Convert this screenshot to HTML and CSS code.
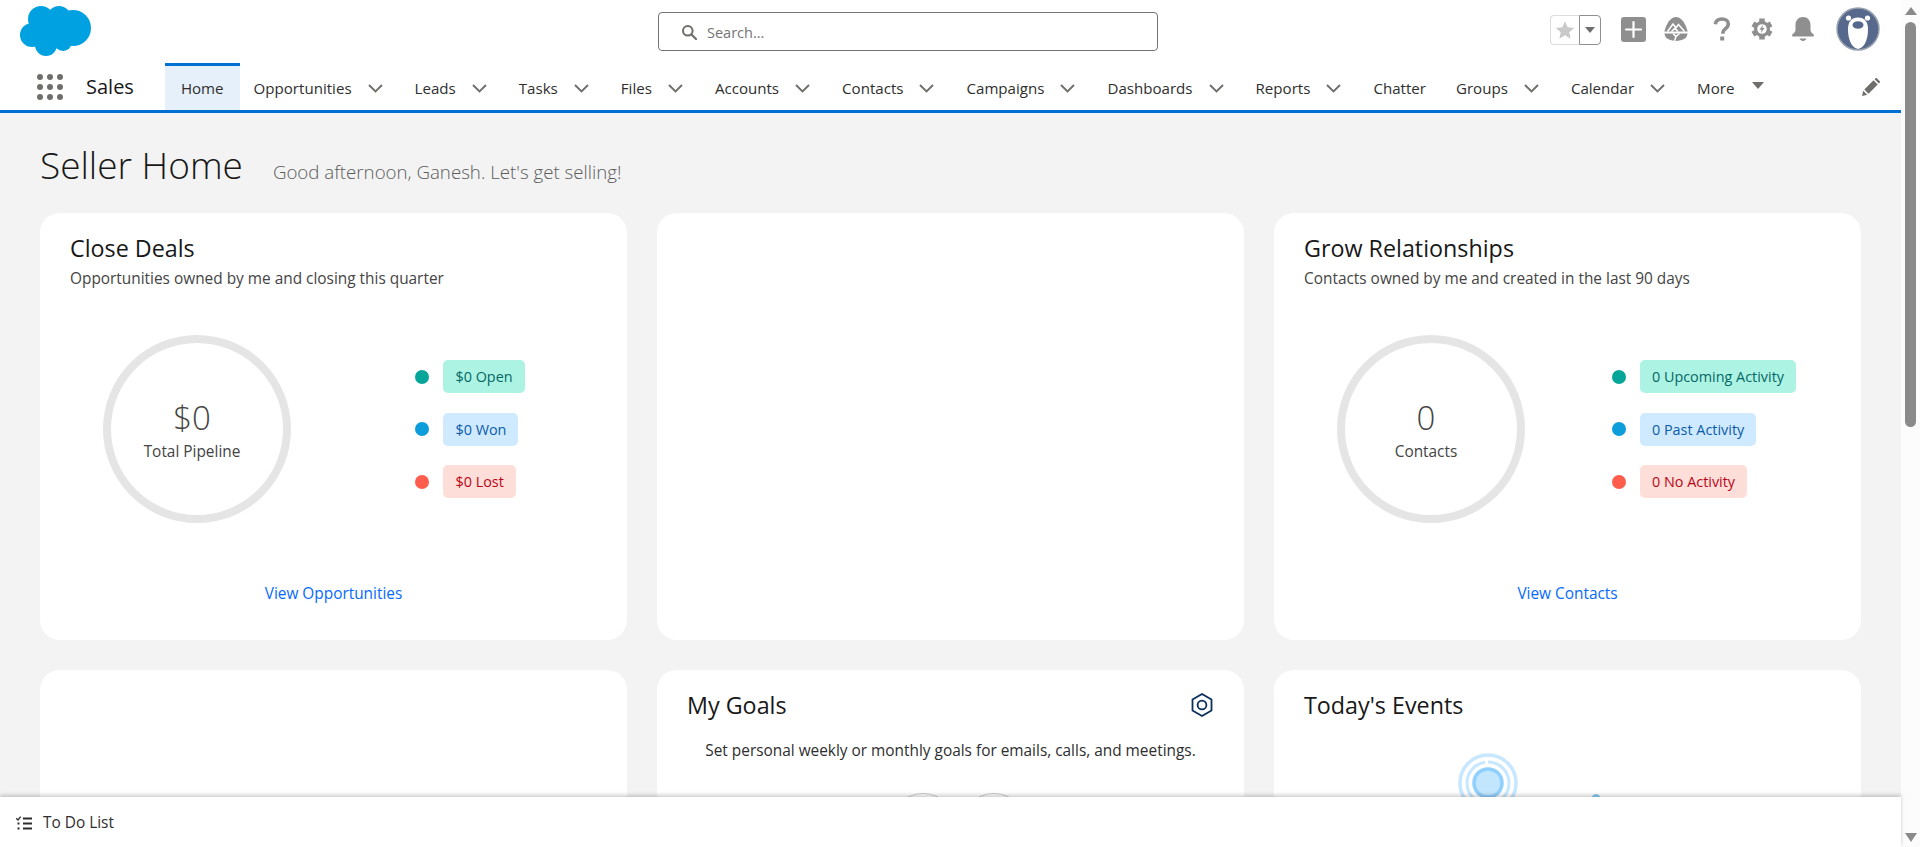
FILE: index.html
```html
<!DOCTYPE html>
<html>
  <head>
    <title>Seller Home</title>
    <link rel="stylesheet" href="styles.css">
  </head>
  <body>
    <div class="app">
      <div class="main">
        <header class="header">
          <div class="topbar">
            <svg class="logo" viewBox="0 0 71 50" width="71" height="50">
              <g fill="#00a1e0">
                <circle cx="21" cy="13" r="13" />
                <circle cx="39" cy="12" r="12" />
                <circle cx="53" cy="22" r="18" />
                <circle cx="12" cy="29" r="12" />
                <circle cx="26" cy="39" r="11" />
                <circle cx="43" cy="36" r="9" />
                <rect x="14" y="12" width="38" height="26" />
              </g>
            </svg>
            <div class="search">
              <svg viewBox="0 0 16 16" width="16" height="16">
                <circle cx="6.8" cy="6.8" r="4.8" fill="none" stroke="#706e6b" stroke-width="2" />
                <path d="M10.5 10.5 L15 15" stroke="#706e6b" stroke-width="2.2" stroke-linecap="round" />
              </svg>
              <span>Search...</span>
            </div>
            <div class="actions">
              <div class="fav">
                <div class="fav-star">
                  <svg viewBox="0 0 24 24" width="20" height="20"><path d="M12 1.500l3.200 7.200 7.800.8-5.900 5.200 1.700 7.700L12 18.400l-6.800 4 1.700-7.700L1 9.500l7.800-.8z" fill="#c9c9c9" /></svg>
                </div>
                <div class="fav-more"><i class="tri tri-sm"></i></div>
              </div>
              <svg class="act act-plus" viewBox="0 0 25 25" width="25" height="25">
                <rect width="25" height="25" rx="3" fill="#8f8f8f" />
                <path d="M12.500 5v15M5 12.500h15" stroke="#fff" stroke-width="2.200" stroke-linecap="round" />
              </svg>
              <svg class="act act-trail" viewBox="0 0 24 24" width="24" height="24">
                <path d="M12 0C7.500 0 4 4.500 2 9.500L.3 14.500h23.400L22 9.500C20 4.500 16.500 0 12 0z" fill="#8f8f8f" />
                <path d="M.4 16.500h23.200c-.4 3-2 5-4.600 6.100-2 .8-4.500 1.400-7 1.400s-5-.6-7-1.400C2.400 21.500.8 19.500.4 16.500z" fill="#8f8f8f" />
                <path d="M3.500 14.500L9 7l3 3.800L14.500 7.500l6 7M7.500 14.500l3.500-3.500 3 3.500M9 16.500l3 3-1.500 4.500M15.500 16.500l-3.500 3" fill="none" stroke="#fff" stroke-width="1.500" />
              </svg>
              <svg class="act act-help" viewBox="0 0 18 24" width="18" height="24">
                <path d="M2.300 7.300C2.800 3.500 5.400 2 9 2c3.800 0 6.300 2.100 6.300 5 0 2.500-1.500 3.700-3 4.900-1.700 1.200-2.400 2-2.400 4v.8" fill="none" stroke="#8f8f8f" stroke-width="3.600" />
                <rect x="7.200" y="19.400" width="4" height="4" rx=".5" fill="#8f8f8f" />
              </svg>
              <svg class="act act-gear" viewBox="0 0 22 22" width="22" height="22">
                <circle cx="11" cy="11" r="8" fill="#8f8f8f" />
                <g stroke="#8f8f8f" stroke-width="5.500">
                  <path d="M11 .5v21" />
                  <path d="M1.900 5.800l18.200 10.400" />
                  <path d="M1.900 16.200l18.200-10.400" />
                </g>
                <circle cx="11" cy="11" r="4.800" fill="#fff" />
                <path d="M12 7L8.500 11.800h2.100l-.7 3.200 3.600-4.900h-2.100z" fill="#8f8f8f" />
              </svg>
              <svg class="act act-bell" viewBox="0 0 24 24" width="24" height="24">
                <path d="M12 0c-4.500 0-7.500 3.500-7.500 8v4.500c0 2.500-1.500 3.800-3.300 5v2h21.600v-2c-1.800-1.200-3.300-2.500-3.300-5V8C19.500 3.500 16.500 0 12 0z" fill="#8f8f8f" />
                <path d="M8.500 21.500h7c-.5 1.500-2 2.500-3.500 2.500s-3-1-3.500-2.500z" fill="#8f8f8f" />
              </svg>
              <svg class="avatar" viewBox="0 0 44 44" width="44" height="44">
                <circle cx="22" cy="22" r="21" fill="#56698d" stroke="#9aa2ae" stroke-width="1.500" />
                <circle cx="12.500" cy="11" r="2.600" fill="#fff" />
                <circle cx="31.500" cy="11" r="2.600" fill="#fff" />
                <path d="M22 10.500c6.500 0 10 4.500 10 11.500 0 8-2 18-10 20C14 40 12 30 12 22c0-7 3.500-11.500 10-11.500z" fill="#fff" />
                <ellipse cx="22" cy="18" rx="5.500" ry="3.800" fill="#56698d" />
              </svg>
            </div>
          </div>
          <nav class="navbar">
            <svg class="launcher" viewBox="0 0 26 26" width="26" height="26">
              <g fill="#706e6b">
                <circle cx="3" cy="3" r="3" /><circle cx="13" cy="3" r="3" /><circle cx="23" cy="3" r="3" />
                <circle cx="3" cy="13" r="3" /><circle cx="13" cy="13" r="3" /><circle cx="23" cy="13" r="3" />
                <circle cx="3" cy="23" r="3" /><circle cx="13" cy="23" r="3" /><circle cx="23" cy="23" r="3" />
              </g>
            </svg>
            <span class="app-name">Sales</span>
            <ul class="tabs">
              <li class="tab active"><span>Home</span></li>
              <li class="tab"><span>Opportunities</span><svg class="chev" viewBox="0 0 15 9"><path d="M1 1l6.500 6.500L14 1" /></svg></li>
              <li class="tab"><span>Leads</span><svg class="chev" viewBox="0 0 15 9"><path d="M1 1l6.500 6.500L14 1" /></svg></li>
              <li class="tab"><span>Tasks</span><svg class="chev" viewBox="0 0 15 9"><path d="M1 1l6.500 6.500L14 1" /></svg></li>
              <li class="tab"><span>Files</span><svg class="chev" viewBox="0 0 15 9"><path d="M1 1l6.500 6.500L14 1" /></svg></li>
              <li class="tab"><span>Accounts</span><svg class="chev" viewBox="0 0 15 9"><path d="M1 1l6.500 6.500L14 1" /></svg></li>
              <li class="tab"><span>Contacts</span><svg class="chev" viewBox="0 0 15 9"><path d="M1 1l6.500 6.500L14 1" /></svg></li>
              <li class="tab"><span>Campaigns</span><svg class="chev" viewBox="0 0 15 9"><path d="M1 1l6.500 6.500L14 1" /></svg></li>
              <li class="tab"><span>Dashboards</span><svg class="chev" viewBox="0 0 15 9"><path d="M1 1l6.500 6.500L14 1" /></svg></li>
              <li class="tab"><span>Reports</span><svg class="chev" viewBox="0 0 15 9"><path d="M1 1l6.500 6.500L14 1" /></svg></li>
              <li class="tab"><span>Chatter</span></li>
              <li class="tab"><span>Groups</span><svg class="chev" viewBox="0 0 15 9"><path d="M1 1l6.500 6.500L14 1" /></svg></li>
              <li class="tab"><span>Calendar</span><svg class="chev" viewBox="0 0 15 9"><path d="M1 1l6.500 6.500L14 1" /></svg></li>
              <li class="tab"><span>More</span><i class="tri tri-more"></i></li>
            </ul>
            <svg class="pencil" viewBox="0 0 18 18" width="18" height="18">
              <path d="M0 18l1.200-5.200L5.200 16.800zM2.300 11.500L11.500 2.300l4.200 4.200-9.200 9.200zM12.600 1.200l1-1c.4-.3.900-.3 1.200 0l3 3c.3.300.3.800 0 1.200l-1 1z" fill="#706e6b" />
            </svg>
          </nav>
        </header>

        <div class="content">
          <div class="page-title">
            <h1>Seller Home</h1>
            <p>Good afternoon, Ganesh. Let's get selling!</p>
          </div>
          <div class="grid">
            <section class="card">
              <h2>Close Deals</h2>
              <p class="sub">Opportunities owned by me and closing this quarter</p>
              <div class="chart">
                <div class="ring">
                  <span class="ring-value">$0</span>
                  <span class="ring-label">Total Pipeline</span>
                </div>
                <ul class="legend">
                  <li><i class="dot dot-green"></i><span class="badge badge-green">$0 Open</span></li>
                  <li><i class="dot dot-blue"></i><span class="badge badge-blue">$0 Won</span></li>
                  <li><i class="dot dot-red"></i><span class="badge badge-red">$0 Lost</span></li>
                </ul>
              </div>
              <a class="view-link" href="#">View Opportunities</a>
            </section>

            <section class="card"></section>

            <section class="card">
              <h2>Grow Relationships</h2>
              <p class="sub">Contacts owned by me and created in the last 90 days</p>
              <div class="chart">
                <div class="ring">
                  <span class="ring-value">0</span>
                  <span class="ring-label">Contacts</span>
                </div>
                <ul class="legend">
                  <li><i class="dot dot-green"></i><span class="badge badge-green">0 Upcoming Activity</span></li>
                  <li><i class="dot dot-blue"></i><span class="badge badge-blue">0 Past Activity</span></li>
                  <li><i class="dot dot-red"></i><span class="badge badge-red">0 No Activity</span></li>
                </ul>
              </div>
              <a class="view-link" href="#">View Contacts</a>
            </section>

            <section class="card"></section>

            <section class="card">
              <div class="card-head">
                <h2>My Goals</h2>
                <svg viewBox="0 0 22 24" width="22" height="24">
                  <path d="M11 1l9.500 5.500v11L11 23l-9.500-5.500v-11z" fill="none" stroke="#0b2f5c" stroke-width="1.800" stroke-linejoin="round" />
                  <circle cx="11" cy="12" r="4.400" fill="none" stroke="#0b2f5c" stroke-width="1.800" />
                </svg>
              </div>
              <p class="goals-text">Set personal weekly or monthly goals for emails, calls, and meetings.</p>
              <div class="goal-circles"><i></i><i></i></div>
            </section>

            <section class="card">
              <h2>Today's Events</h2>
              <div class="events-art">
                <svg viewBox="0 0 170 64" width="170" height="64">
                  <circle cx="30" cy="30" r="28" fill="none" stroke="#c6e7ff" stroke-width="3.500" />
                  <path d="M30 9a21 21 0 1 1-21 21 21 21 0 0 1 18-20.800M51 30a21 21 0 0 0-3-11" fill="none" stroke="#c6e7ff" stroke-width="3" />
                  <circle cx="30" cy="30" r="14" fill="#c2e6fe" stroke="#90d0fe" stroke-width="3.500" />
                  <circle cx="138" cy="45" r="4" fill="#8ccbf0" />
                </svg>
              </div>
            </section>
          </div>
        </div>

        <footer class="todo">
          <svg viewBox="0 0 16 14" width="16" height="14">
            <path d="M.3 2.300L2 4 4.700.6" fill="none" stroke="#2e2e2e" stroke-width="1.300" />
            <path d="M7 2.500h9M7 7.500h9M7 12.500h9" stroke="#2e2e2e" stroke-width="1.800" />
            <path d="M1.500 6.500h2v2h-2zM1.500 11.500h2v2h-2z" fill="#2e2e2e" />
          </svg>
          <span>To Do List</span>
        </footer>
      </div>

      <div class="scrollbar">
        <i class="sb-up"></i>
        <div class="sb-track"><div class="sb-thumb"></div></div>
        <i class="sb-down"></i>
      </div>
    </div>
  </body>
</html>
```

FILE: styles.css
```css
* {
  box-sizing: border-box;
}

html, body {
  height: 100%;
  margin: 0;
  overflow: hidden;
}

body {
  font-family: "Open Sans", "Noto Sans", sans-serif;
  font-size: 15.4px;
  color: #2e2e2e;
}

h1, h2, p, ul {
  margin: 0;
  padding: 0;
}

ul {
  list-style: none;
}

i {
  display: block;
}

.app {
  display: flex;
  height: 100%;
}

.main {
  flex: 1;
  display: flex;
  flex-direction: column;
  min-width: 0;
}

/* header */
.header {
  background: #fff;
  border-bottom: 3px solid #0070d2;
}

.topbar {
  display: flex;
  align-items: flex-start;
  height: 63px;
  padding-left: 20px;
}

.logo {
  margin-top: 6px;
}

.search {
  display: flex;
  align-items: center;
  gap: 10px;
  width: 500px;
  height: 39px;
  margin: 12px 0 0 567px;
  padding: 1px 0 0 22px;
  border: 1px solid #747474;
  border-radius: 4px;
  font-size: 14.5px;
  color: #747474;
}

.actions {
  display: flex;
  align-items: center;
  height: 58px;
  margin-left: 392px;
}

.fav {
  display: flex;
  width: 51px;
  height: 30px;
  margin-top: 2px;
}

.fav-star {
  display: flex;
  align-items: center;
  justify-content: center;
  width: 29px;
  border: 1px solid #dcdcdc;
  border-right: 0;
  border-radius: 4px 0 0 4px;
}

.fav-more {
  display: flex;
  align-items: center;
  justify-content: center;
  width: 22px;
  border: 1px solid #8f8f8f;
  border-radius: 0 4px 4px 0;
}

.tri {
  width: 0;
  height: 0;
  border-style: solid;
  border-color: #706e6b transparent transparent;
}

.tri-sm {
  border-width: 6px 5.5px 0;
}

.act-plus {
  margin-left: 20px;
}

.act-trail {
  margin-left: 18px;
}

.act-help {
  margin-left: 25px;
}

.act-gear {
  margin-left: 20px;
}

.act-bell {
  margin-left: 18px;
}

.avatar {
  margin-left: 21px;
}

.navbar {
  display: flex;
  align-items: stretch;
  height: 47px;
  padding-left: 37px;
}

.launcher {
  align-self: center;
}

.app-name {
  align-self: center;
  margin: 0 31px 0 23px;
  font-size: 20px;
  color: #181818;
}

.tabs {
  flex: 1;
  display: flex;
  font-size: 15.1px;
}

.tab {
  display: flex;
  align-items: center;
  gap: 16px;
  padding: 3px 16px 0 14px;
  color: #2e2e2e;
}

.tab.active {
  padding: 3px 16px 0;
  background: #e6f0fa;
  box-shadow: inset 0 3px 0 #0070d2;
}

.chev {
  width: 15px;
  height: 9px;
  margin-right: 2px;
  fill: none;
  stroke: #706e6b;
  stroke-width: 1.900;
}

.tri-more {
  margin: -5px 0 0 2px;
  border-width: 7px 6.500px 0;
}

.pencil {
  align-self: center;
  margin-right: 21px;
}

/* page */
.content {
  flex: 1;
  min-height: 0;
  overflow: hidden;
  padding: 0 40px;
  background: #f3f3f3;
}

.page-title {
  display: flex;
  align-items: baseline;
  gap: 30px;
  height: 100px;
  padding-top: 26px;
}

h1 {
  font-size: 37px;
  font-weight: 300;
  color: #181818;
}

.page-title p {
  font-size: 18.700px;
  font-weight: 300;
  color: #5c5c5c;
}

.grid {
  display: grid;
  grid-template-columns: repeat(3, 587px);
  grid-auto-rows: 427px;
  gap: 30px;
}

.card {
  padding: 20px 0 0 30px;
  background: #fff;
  border-radius: 20px;
}

h2 {
  font-size: 23.300px;
  line-height: 30px;
  font-weight: 400;
  color: #181818;
}

.sub {
  margin-top: 6px;
  line-height: 20px;
  color: #444;
}

.chart {
  display: grid;
  grid-template-columns: 254px 292px;
  align-items: center;
  margin-top: 46px;
}

.ring {
  display: flex;
  flex-direction: column;
  align-items: center;
  justify-content: center;
  gap: 4px;
  width: 188px;
  height: 188px;
  padding: 2px 10px 0 0;
  justify-self: center;
  border: 8px solid #e5e5e5;
  border-radius: 50%;
}

.ring-value {
  font-size: 33px;
  line-height: 40px;
  font-weight: 300;
  color: #444;
}

.ring-label {
  line-height: 20px;
  color: #444;
}

.legend {
  display: flex;
  flex-direction: column;
  gap: 19.500px;
  justify-self: center;
  font-size: 14.400px;
}

.legend li {
  display: flex;
  align-items: center;
  gap: 14px;
}

.dot {
  width: 14px;
  height: 14px;
  border-radius: 50%;
}

.dot-green {
  background: #06a59a;
}

.dot-blue {
  background: #0d9dda;
}

.dot-red {
  background: #fe5c4c;
}

.badge {
  padding: 0 12px;
  line-height: 33px;
  border-radius: 5px;
}

.badge-green {
  background: #acf3e4;
  color: #056764;
}

.badge-blue {
  background: #cfe9fe;
  color: #0b5cab;
}

.badge-red {
  background: #feded8;
  color: #ba0517;
}

.view-link {
  display: block;
  margin: 61px 30px 0 0;
  line-height: 20px;
  text-align: center;
  color: #066afe;
  text-decoration: none;
}

.card-head {
  display: flex;
  justify-content: space-between;
  align-items: center;
  padding-right: 31px;
}

.goals-text {
  margin-top: 21px;
  padding-right: 30px;
  line-height: 20px;
  text-align: center;
  color: #2e2e2e;
}

.goal-circles {
  display: flex;
  justify-content: center;
  gap: 3px;
  margin: 32px 14px 0 0;
}

.goal-circles i {
  width: 68px;
  height: 68px;
  border: 1px solid #c9c9c9;
  border-radius: 50%;
}

.events-art {
  margin: 33px 0 0 154px;
}

/* to do bar */
.todo {
  position: relative;
  display: flex;
  align-items: center;
  gap: 11px;
  height: 50px;
  padding: 1px 0 0 16px;
  background: #fff;
  box-shadow: 0 -2px 4px rgba(0, 0, 0, .2);
}

/* scrollbar */
.scrollbar {
  display: flex;
  flex-direction: column;
  align-items: center;
  width: 19px;
  background: #fcfcfc;
}

.sb-up, .sb-down {
  width: 0;
  height: 0;
  border-style: solid;
  border-color: transparent;
}

.sb-up {
  margin-top: 7px;
  border-width: 0 6px 8px;
  border-bottom-color: #8a8a8a;
}

.sb-down {
  margin-bottom: 5px;
  border-width: 9px 6px 0;
  border-top-color: #8a8a8a;
}

.sb-track {
  flex: 1;
  width: 11px;
  padding-top: 7px;
}

.sb-thumb {
  height: 405px;
  background: #8a8a8a;
  border-radius: 6px;
}
```
